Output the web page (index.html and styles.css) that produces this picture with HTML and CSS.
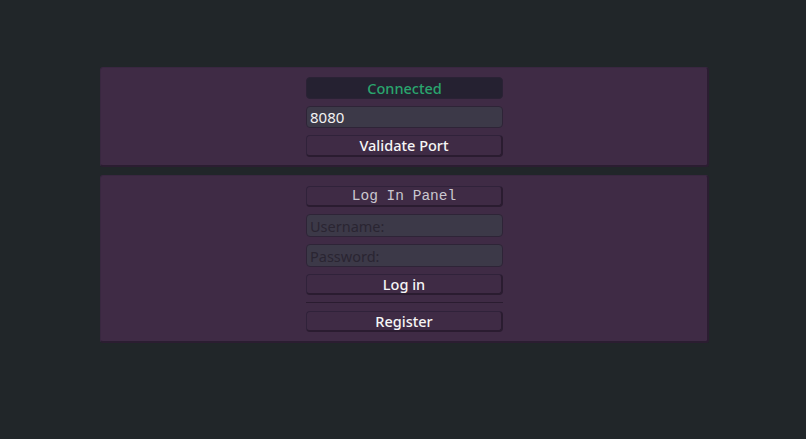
FILE: index.html
```html
<!DOCTYPE html>
<html>
<head>
<meta charset="utf-8">
<link rel="stylesheet" href="styles.css">
</head>
<body>
<div class="page">
  <div class="panel panel-top">
    <div class="col">
      <div class="status">Connected</div>
      <input class="field field-port" type="text" value="8080">
      <button class="btn">Validate Port</button>
    </div>
  </div>
  <div class="panel panel-login">
    <div class="col">
      <div class="title">Log In Panel</div>
      <input class="field" type="text" placeholder="Username:">
      <input class="field" type="password" placeholder="Password:">
      <button class="btn">Log in</button>
      <div class="sep"></div>
      <button class="btn">Register</button>
    </div>
  </div>
</div>
</body>
</html>
```
FILE: styles.css
```css
* { box-sizing: border-box; }
html, body { margin: 0; padding: 0; }
body {
  background: #212629;
  width: 806px;
  height: 439px;
  font-family: "Noto Sans", sans-serif;
  overflow: hidden;
}
.page {
  padding: 67px 0 0 100px;
  display: flex;
  flex-direction: column;
  gap: 8px;
}
.panel {
  width: 609px;
  background: #3f2b45;
  border-radius: 3px;
  border-top: 1px solid #392740;
  border-left: 1px solid #392740;
  border-right: 2px solid #2b1d31;
  border-bottom: 2px solid #2b1d31;
  display: flex;
  justify-content: center;
}
.panel-top { height: 100px; padding-top: 9px; }
.panel-login { height: 168px; padding-top: 10px; }
.col {
  width: 197px;
  margin-left: 1px;
  display: flex;
  flex-direction: column;
  gap: 7px;
}
.status {
  height: 22px;
  background: #252131;
  border: 1px solid #2a2235;
  border-radius: 4px;
  color: #2aa56e;
  font-size: 14.5px;
  font-weight: 500;
  line-height: 21px;
  text-align: center;
}
.field {
  height: 22px;
  background: #3c3948;
  border: 1px solid #2e2437;
  border-radius: 4px;
  color: #f2f2f2;
  font-family: "Noto Sans", sans-serif;
  font-size: 14.5px;
  padding: 0 0 0 3px;
  margin: 0;
  outline: none;
}
.panel-login .field { height: 23px; }
.field::placeholder { color: #2a2532; opacity: 1; }
.field-port { font-size: 15px; }
.btn {
  height: 22px;
  background: #3f2b45;
  border: 1px solid #30223a;
  border-right: 2px solid #2a1c30;
  border-bottom: 2px solid #2a1c30;
  border-radius: 4px;
  color: #f6f6f6;
  font-family: "Noto Sans", sans-serif;
  font-size: 14.5px;
  font-weight: 500;
  padding: 0;
  margin: 0;
  line-height: 19px;
}
.panel-login .btn { height: 21px; }
.title {
  height: 21px;
  border: 1px solid #30223a;
  border-right: 2px solid #2a1c30;
  border-bottom: 2px solid #2a1c30;
  border-radius: 4px;
  color: #cbc7cf;
  font-family: "Liberation Mono", monospace;
  font-size: 14.5px;
  line-height: 18px;
  text-align: center;
}
.sep {
  height: 1px;
  background: #2a1c30;
  margin: 0 0 1px 0;
}
```
